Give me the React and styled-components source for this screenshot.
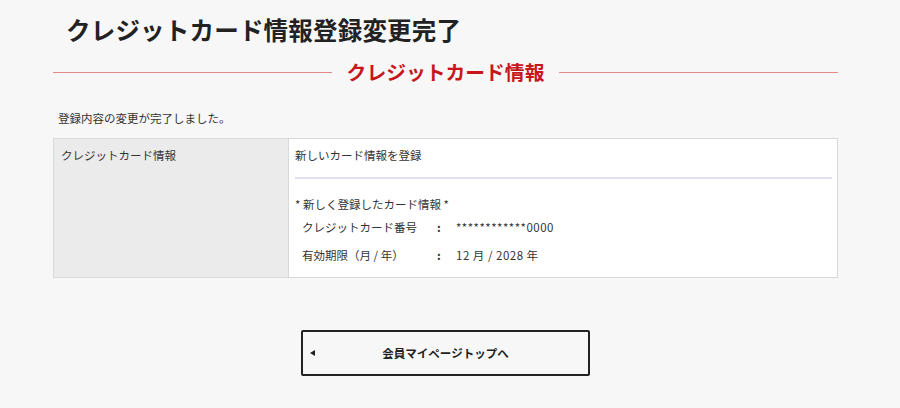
import React from 'react';
import styled, { createGlobalStyle } from 'styled-components';

const GlobalStyle = createGlobalStyle`
  body {
    margin: 0;
    background: #f7f7f7;
    font-family: "Noto Sans CJK JP", "Noto Sans", sans-serif;
    color: #333;
  }
`;

const Page = styled.div`
  width: 900px;
  height: 408px;
  padding: 12px 62px 0 53px;
  box-sizing: border-box;
`;

const Title = styled.h1`
  margin: 0 0 0 13px;
  font-size: 24.5px;
  line-height: 36px;
  font-weight: 700;
  color: #222;
  letter-spacing: 0.2px;
`;

const SectionHead = styled.div`
  display: flex;
  align-items: center;
  gap: 15px;
  margin-top: 9px;
  height: 30px;

  &::before,
  &::after {
    content: '';
    flex: 1;
    height: 1px;
    background: #e28a8a;
  }
`;

const SectionTitle = styled.h2`
  margin: 0;
  font-size: 19.8px;
  font-weight: 700;
  color: #c8161d;
  line-height: 30px;
`;

const Message = styled.p`
  margin: 23px 0 0 5px;
  font-size: 11.5px;
  line-height: 16px;
  color: #333;
`;

const Table = styled.div`
  display: grid;
  grid-template-columns: 235px 1fr;
  margin-top: 12px;
  border: 1px solid #d9d9d9;
  background: #fff;
`;

const HeadCell = styled.div`
  background: #ebebeb;
  border-right: 1px solid #d9d9d9;
  padding: 7px 7px;
  font-size: 11.5px;
  line-height: 18px;
`;

const BodyCell = styled.div`
  padding: 7px 5px 13px 6px;
  font-size: 11.5px;
  line-height: 18px;
`;

const Divider = styled.hr`
  margin: 13px 0 0;
  border: none;
  height: 2px;
  background: #e1e1f0;
`;

const Note = styled.div`
  margin-top: 16px;
`;

const InfoList = styled.dl`
  display: grid;
  grid-template-columns: 135px 19px 1fr;
  row-gap: 10px;
  margin: 5px 0 0 7px;
`;

const Term = styled.dt`
  margin: 0;
`;

const Colon = styled.span`
  font-weight: 700;
`;

const Value = styled.dd`
  margin: 0;
  letter-spacing: 0.5px;
`;

const ButtonRow = styled.div`
  display: flex;
  justify-content: center;
  margin-top: 52px;
`;

const BackButton = styled.button`
  position: relative;
  width: 289px;
  height: 46px;
  border: 2px solid #222;
  border-radius: 2px;
  background: #f7f7f7;
  font-family: inherit;
  font-size: 11.5px;
  font-weight: 700;
  color: #222;
  cursor: pointer;

  &::before {
    content: '';
    position: absolute;
    left: 7px;
    top: 50%;
    margin-top: -3px;
    border-style: solid;
    border-width: 3px 5px 3px 0;
    border-color: transparent #222 transparent transparent;
  }
`;

export default function App() {
  return (
    <Page>
      <GlobalStyle />
      <Title>クレジットカード情報登録変更完了</Title>
      <SectionHead>
        <SectionTitle>クレジットカード情報</SectionTitle>
      </SectionHead>
      <Message>登録内容の変更が完了しました。</Message>
      <Table>
        <HeadCell>クレジットカード情報</HeadCell>
        <BodyCell>
          <div>新しいカード情報を登録</div>
          <Divider />
          <Note>* 新しく登録したカード情報 *</Note>
          <InfoList>
            <Term>クレジットカード番号</Term>
            <Colon>:</Colon>
            <Value>************0000</Value>
            <Term>有効期限（月 / 年）</Term>
            <Colon>:</Colon>
            <Value>12 月 / 2028 年</Value>
          </InfoList>
        </BodyCell>
      </Table>
      <ButtonRow>
        <BackButton>会員マイページトップへ</BackButton>
      </ButtonRow>
    </Page>
  );
}
